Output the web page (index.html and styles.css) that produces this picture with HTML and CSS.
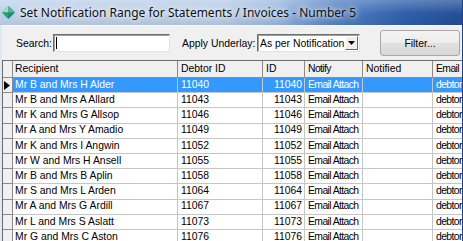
FILE: index.html
```html
<!DOCTYPE html>
<html>
<head>
<meta charset="utf-8">
<title>Set Notification Range</title>
<link rel="stylesheet" href="styles.css">
</head>
<body>
<div class="window">
  <div class="titlebar">
    <svg class="appicon" width="13" height="13" viewBox="0 0 13 13">
      <polygon points="6.5,0 13,6.5 6.5,13 0,6.5" fill="#23866f"/>
      <polygon points="6.5,0 6.5,6.5 0,6.5" fill="#9be0c0"/>
      <polygon points="6.5,0 13,6.5 6.5,6.5" fill="#4fb894"/>
      <polygon points="0,6.5 6.5,6.5 6.5,13" fill="#2f9a7e"/>
    </svg>
    <span class="title">Set Notification Range for Statements / Invoices - Number 5</span>
  </div>
  <div class="client">
    <div class="toolbar">
      <span class="lbl search">Search:</span>
      <div class="textbox"><span class="caret"></span></div>
      <span class="lbl underlay">Apply Underlay:</span>
      <div class="combo">
        <span class="combo-text">As per Notification</span>
        <span class="combo-btn"><svg width="7" height="4" viewBox="0 0 7 4"><polygon points="0,0 7,0 3.5,4" fill="#000"/></svg></span>
      </div>
      <button class="btn">Filter...</button>
    </div>
    <div class="grid">
      <div class="row head">
        <div class="cell ind"></div>
        <div class="cell">Recipient</div>
        <div class="cell">Debtor ID</div>
        <div class="cell">ID</div>
        <div class="cell">Notify</div>
        <div class="cell">Notified</div>
        <div class="cell">Email</div>
      </div>
      <div class="row sel">
        <div class="cell ind"><svg width="6" height="9" viewBox="0 0 6 9"><polygon points="0,0 6,4.5 0,9" fill="#000"/></svg></div>
        <div class="cell">Mr B and Mrs H Alder</div><div class="cell">11040</div><div class="cell num">11040</div><div class="cell">Email Attach</div><div class="cell"></div><div class="cell">debtors@</div>
      </div>
      <div class="row">
        <div class="cell ind"></div>
        <div class="cell">Mr B and Mrs A Allard</div><div class="cell">11043</div><div class="cell num">11043</div><div class="cell">Email Attach</div><div class="cell"></div><div class="cell">debtors@</div>
      </div>
      <div class="row">
        <div class="cell ind"></div>
        <div class="cell">Mr K and Mrs G Allsop</div><div class="cell">11046</div><div class="cell num">11046</div><div class="cell">Email Attach</div><div class="cell"></div><div class="cell">debtors@</div>
      </div>
      <div class="row">
        <div class="cell ind"></div>
        <div class="cell">Mr A and Mrs Y Amadio</div><div class="cell">11049</div><div class="cell num">11049</div><div class="cell">Email Attach</div><div class="cell"></div><div class="cell">debtors@</div>
      </div>
      <div class="row">
        <div class="cell ind"></div>
        <div class="cell">Mr K and Mrs I Angwin</div><div class="cell">11052</div><div class="cell num">11052</div><div class="cell">Email Attach</div><div class="cell"></div><div class="cell">debtors@</div>
      </div>
      <div class="row">
        <div class="cell ind"></div>
        <div class="cell">Mr W and Mrs H Ansell</div><div class="cell">11055</div><div class="cell num">11055</div><div class="cell">Email Attach</div><div class="cell"></div><div class="cell">debtors@</div>
      </div>
      <div class="row">
        <div class="cell ind"></div>
        <div class="cell">Mr B and Mrs B Aplin</div><div class="cell">11058</div><div class="cell num">11058</div><div class="cell">Email Attach</div><div class="cell"></div><div class="cell">debtors@</div>
      </div>
      <div class="row">
        <div class="cell ind"></div>
        <div class="cell">Mr S and Mrs L Arden</div><div class="cell">11064</div><div class="cell num">11064</div><div class="cell">Email Attach</div><div class="cell"></div><div class="cell">debtors@</div>
      </div>
      <div class="row">
        <div class="cell ind"></div>
        <div class="cell">Mr A and Mrs G Ardill</div><div class="cell">11067</div><div class="cell num">11067</div><div class="cell">Email Attach</div><div class="cell"></div><div class="cell">debtors@</div>
      </div>
      <div class="row">
        <div class="cell ind"></div>
        <div class="cell">Mr L and Mrs S Aslatt</div><div class="cell">11073</div><div class="cell num">11073</div><div class="cell">Email Attach</div><div class="cell"></div><div class="cell">debtors@</div>
      </div>
      <div class="row">
        <div class="cell ind"></div>
        <div class="cell">Mr G and Mrs C Aston</div><div class="cell">11076</div><div class="cell num">11076</div><div class="cell">Email Attach</div><div class="cell"></div><div class="cell">debtors@</div>
      </div>
    </div>
  </div>
</div>
</body>
</html>
```
FILE: styles.css
```css
* { box-sizing: border-box; }
html, body { margin: 0; padding: 0; }
body {
  width: 463px;
  height: 241px;
  overflow: hidden;
  background: #22407a;
  font-family: "Liberation Sans", Arial, sans-serif;
  font-size: 10.4px;
  color: #000;
}
.window {
  width: 462px;
  height: 241px;
  display: flex;
  flex-direction: column;
  background: #f0f0f0;
}
.titlebar {
  flex: none;
  height: 25px;
  display: flex;
  align-items: center;
  gap: 5px;
  padding-left: 2px;
  background:
    linear-gradient(to bottom, rgba(255,255,255,0.25), rgba(255,255,255,0) 55%, rgba(0,0,0,0.06)),
    linear-gradient(to right, #bfd2ea 0%, #b8cde7 48%, #9ab8e0 60%, #5683c5 72%, #2f5ea9 88%, #244f98 100%);
}
.appicon { flex: none; }
.title {
  font-family: "Noto Sans", "Open Sans", sans-serif;
  font-size: 12px;
  color: #111;
  text-shadow: 0 0 5px #fff, 0 0 8px rgba(255,255,255,0.8);
  white-space: nowrap;
}
.client {
  flex: 1;
  display: flex;
  flex-direction: column;
  min-height: 0;
  border-left: 2px solid #dfe8f4;
  border-top: 1px solid #f8f8f8;
}
.toolbar {
  flex: none;
  height: 34px;
  display: flex;
  align-items: center;
  padding-left: 14px;
}
.lbl { white-space: nowrap; flex: none; }
.search { width: 37px; }
.textbox {
  flex: none;
  width: 117px;
  height: 18px;
  background: #fff;
  border: 1px solid;
  border-color: #6d6d6d #e3e3e3 #e3e3e3 #6d6d6d;
  box-shadow: inset 1px 1px 0 #a0a0a0;
  padding: 2px 0 0 2px;
}
.caret {
  display: block;
  width: 1px;
  height: 12px;
  background: #000;
}
.underlay { margin-left: 12px; width: 75px; }
.combo {
  flex: none;
  width: 103px;
  height: 18px;
  background: #fff;
  border: 1px solid;
  border-color: #6d6d6d #e3e3e3 #e3e3e3 #6d6d6d;
  box-shadow: inset 1px 1px 0 #a0a0a0;
  display: flex;
  align-items: center;
  justify-content: space-between;
  padding: 0 1px 0 2px;
}
.combo-text { white-space: nowrap; }
.combo-btn {
  width: 13px;
  height: 14px;
  background: #f0f0f0;
  border: 1px solid;
  border-color: #fff #696969 #696969 #fff;
  display: flex;
  align-items: center;
  justify-content: center;
}
.btn {
  flex: none;
  margin-left: 20px;
  width: 80px;
  height: 26px;
  font: inherit;
  color: #000;
  background: linear-gradient(to bottom, #f4f4f4 0%, #ececec 50%, #e0e0e0 51%, #d9d9d9 100%);
  border: 1px solid #a8a8a8;
  border-radius: 3px;
  padding: 0;
}
.grid {
  flex: 1;
  overflow: hidden;
  background: #fff;
  border-top: 1px solid #6d6d6d;
  border-left: 1px solid #6d6d6d;
}
.row {
  display: grid;
  grid-template-columns: 10px 165px 85px 42px 58px 70px 120px;
  height: 15.2px;
}
.row.head { height: 17px; }
.cell {
  border-right: 1px solid #c6c6c6;
  border-bottom: 1px solid #c6c6c6;
  padding: 0 2px 0 3px;
  white-space: nowrap;
  overflow: hidden;
  display: flex;
  align-items: center;
  line-height: 1;
}
.cell:nth-child(2) { padding-left: 2px; }
.cell:nth-child(5),
.cell:nth-child(7) { letter-spacing: -0.6px; }
.cell.num { justify-content: flex-end; }
.head .cell {
  background: #f0f0f0;
  border-right-color: #8a8a8a;
  border-bottom-color: #8a8a8a;
}
.cell.ind {
  background: #f0f0f0;
  border-right-color: #8a8a8a;
  border-bottom-color: #8a8a8a;
  padding: 0 0 0 1px;
}
.sel .cell { background: #3399ff; color: #fff; }
.sel .cell.ind { background: #f0f0f0; }
```
